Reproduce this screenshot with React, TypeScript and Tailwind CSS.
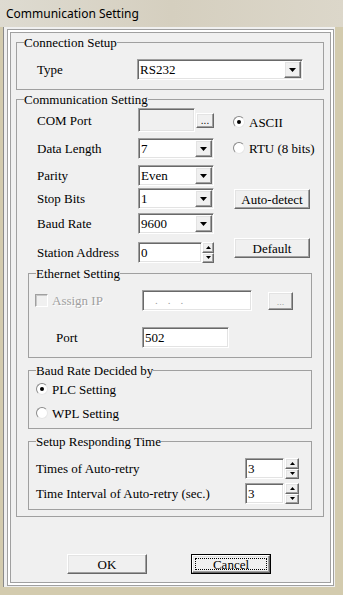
import React from "react";

const sunken =
  "border border-t-[#a0a0a0] border-l-[#a0a0a0] border-b-white border-r-white shadow-[inset_1px_1px_0_#696969,inset_-1px_-1px_0_#e3e3e3]";
const raised =
  "bg-[#f0f0f0] border border-t-white border-l-white border-b-[#696969] border-r-[#696969] shadow-[inset_-1px_-1px_0_#a0a0a0,inset_1px_1px_0_#e3e3e3]";

const Tri = ({ up, w = 7, h = 4 }: { up?: boolean; w?: number; h?: number }) => (
  <svg width={w} height={h} viewBox={`0 0 ${w} ${h}`}>
    <polygon points={up ? `0,${h} ${w},${h} ${w / 2},0` : `0,0 ${w},0 ${w / 2},${h}`} fill="#000" />
  </svg>
);

const Combo = ({ value, w }: { value: string; w: string }) => (
  <div className={`${sunken} ${w} h-[21px] bg-white flex items-center p-[1px]`}>
    <span className="flex-1 pl-[1px] leading-[15px]">{value}</span>
    <div className={`${raised} w-[17px] h-full flex items-center justify-center`}>
      <Tri />
    </div>
  </div>
);

const Spin = ({ w, h }: { w: string; h: string }) => (
  <div className={`flex flex-col ${w} ${h}`}>
    <div className={`${raised} flex-1 flex items-center justify-center`}>
      <Tri up w={5} h={3} />
    </div>
    <div className={`${raised} flex-1 flex items-center justify-center`}>
      <Tri w={5} h={3} />
    </div>
  </div>
);

const Radio = ({ checked, label }: { checked?: boolean; label: string }) => (
  <div className="flex items-center h-[16px]">
    <span className="w-[12px] h-[12px] rounded-full bg-white border border-t-[#8a8a8a] border-l-[#8a8a8a] border-b-[#e6e6e6] border-r-[#e6e6e6] flex items-center justify-center">
      {checked && <span className="w-[4px] h-[4px] rounded-full bg-black" />}
    </span>
    <span className="ml-[4px]">{label}</span>
  </div>
);

const Legend = ({ children }: { children: React.ReactNode }) => (
  <legend className="ml-[7px] leading-[15px]">{children}</legend>
);

const Row = ({ label, mt, children }: { label: string; mt: string; children: React.ReactNode }) => (
  <div className={`flex items-center ${mt}`}>
    <span className="w-[101px]">{label}</span>
    {children}
  </div>
);

export default function App() {
  return (
    <div className="w-[343px] h-[595px] bg-[#d3cbae] flex flex-col overflow-hidden font-['Liberation_Serif',serif] text-[13px] leading-[15px] text-black">
      <div className="h-[27px] shrink-0 flex items-center pl-[6px] bg-gradient-to-r from-[#dedbd1] via-[#d5cfbf] to-[#dcd7ca] font-['Noto_Sans',sans-serif] text-[12px]">
        Communication Setting
      </div>

      <div className="ml-[3px] w-[332px] h-[560px] bg-[#f0f0f0] border-l border-[#8a8a8a] pl-[3px] pt-[2px]">
        <div className="w-[327px] h-[557px] border border-[#a0a0a0] shadow-[inset_0_0_0_2px_#fff,inset_0_0_0_3px_#a0a0a0] pl-[8px] pt-[5px]">
          {/* connection */}
          <fieldset className="w-[308px] border border-[#a0a0a0]">
            <Legend>Connection Setup</Legend>
            <div className="flex items-center pl-[20px] pt-[9px] pb-[9px]">
              <span className="w-[100px]">Type</span>
              <Combo value="RS232" w="w-[166px]" />
            </div>
          </fieldset>

          {/* communication */}
          <fieldset className="mt-[2px] w-[308px] border border-[#a0a0a0] pb-[6px]">
            <Legend>Communication Setting</Legend>
            <div className="flex pl-[20px]">
              <div className="flex flex-col">
                <Row label="COM Port" mt="mt-[1px]">
                  <div className={`${sunken} w-[57px] h-[24px] bg-[#f0f0f0]`} />
                  <div className={`${raised} ml-[1px] w-[18px] h-[15px] flex items-end justify-center text-[10px] leading-[10px] font-['Liberation_Sans',sans-serif] pb-[1px]`}>
                    ...
                  </div>
                </Row>
                <Row label="Data Length" mt="mt-[6px]">
                  <Combo value="7" w="w-[76px]" />
                </Row>
                <Row label="Parity" mt="mt-[6px]">
                  <Combo value="Even" w="w-[76px]" />
                </Row>
                <Row label="Stop Bits" mt="mt-[2px]">
                  <Combo value="1" w="w-[76px]" />
                </Row>
                <Row label="Baud Rate" mt="mt-[4px]">
                  <Combo value="9600" w="w-[76px]" />
                </Row>
                <Row label="Station Address" mt="mt-[8px]">
                  <div className={`${sunken} w-[64px] h-[21px] bg-white pl-[2px] flex items-center`}>0</div>
                  <Spin w="w-[12px]" h="h-[21px]" />
                </Row>
              </div>
              <div className="ml-[19px] flex flex-col">
                <div className="mt-[7px]">
                  <Radio checked label="ASCII" />
                </div>
                <div className="mt-[10px]">
                  <Radio label="RTU (8 bits)" />
                </div>
                <div className={`${raised} mt-[33px] ml-[1px] w-[76px] h-[20px] flex items-center justify-center`}>
                  Auto-detect
                </div>
                <div className={`${raised} mt-[29px] ml-[1px] w-[76px] h-[20px] flex items-center justify-center`}>
                  Default
                </div>
              </div>
            </div>

            {/* ethernet */}
            <fieldset className="ml-[11px] mt-[3px] w-[284px] border border-[#a0a0a0]">
              <Legend>Ethernet Setting</Legend>
              <div className="pl-[6px] pt-[9px] pb-[9px]">
                <div className="flex items-center h-[21px]">
                  <div className="w-[107px] flex items-center">
                    <span className="w-[13px] h-[13px] bg-[#f0f0f0] border border-t-[#a0a0a0] border-l-[#a0a0a0] border-b-white border-r-white shadow-[inset_1px_1px_0_#c8c8c8]" />
                    <span className="ml-[4px] text-[#a0a0a0] [text-shadow:1px_1px_0_#fff]">Assign IP</span>
                  </div>
                  <div className={`${sunken} w-[110px] h-[21px] bg-white flex items-center pl-[12px] gap-[10px] text-[#a0a0a0] text-[11px]`}>
                    <span>.</span>
                    <span>.</span>
                    <span>.</span>
                  </div>
                  <div className={`${raised} ml-[16px] w-[25px] h-[18px] flex items-end justify-center pb-[2px] text-[9px] leading-[9px] text-[#a0a0a0] font-['Liberation_Sans',sans-serif]`}>
                    ...
                  </div>
                </div>
                <div className="flex items-center h-[21px] mt-[16px]">
                  <span className="w-[107px] pl-[21px]">Port</span>
                  <div className={`${sunken} w-[87px] h-[21px] bg-white pl-[2px] flex items-center`}>502</div>
                </div>
              </div>
            </fieldset>

            {/* baud rate decided */}
            <fieldset className="ml-[11px] mt-[5px] w-[284px] border border-[#a0a0a0]">
              <Legend>Baud Rate Decided by</Legend>
              <div className="pl-[7px] pt-[3px] pb-[7px] flex flex-col gap-[8px]">
                <Radio checked label="PLC Setting" />
                <Radio label="WPL Setting" />
              </div>
            </fieldset>

            {/* responding time */}
            <fieldset className="ml-[11px] mt-[5px] w-[284px] border border-[#a0a0a0]">
              <Legend>Setup Responding Time</Legend>
              <div className="pl-[7px] pt-[9px] pb-[5px] flex flex-col gap-[4px]">
                {["Times of Auto-retry", "Time Interval of Auto-retry (sec.)"].map((t) => (
                  <div key={t} className="flex items-center h-[21px]">
                    <span className="w-[209px]">{t}</span>
                    <div className={`${sunken} w-[39px] h-[21px] bg-white pl-[2px] flex items-center`}>3</div>
                    <div className="ml-[1px]">
                      <Spin w="w-[14px]" h="h-[21px]" />
                    </div>
                  </div>
                ))}
              </div>
            </fieldset>
          </fieldset>

          <div className="flex mt-[37px] ml-[51px] gap-[44px]">
            <div className={`${raised} w-[80px] h-[20px] flex items-center justify-center`}>OK</div>
            <div className="w-[80px] h-[20px] border border-black flex">
              <div className={`${raised} flex-1 p-[2px] flex`}>
                <span className="flex-1 border border-dotted border-black flex items-center justify-center leading-[13px]">
                  Cancel
                </span>
              </div>
            </div>
          </div>
        </div>
      </div>
    </div>
  );
}
